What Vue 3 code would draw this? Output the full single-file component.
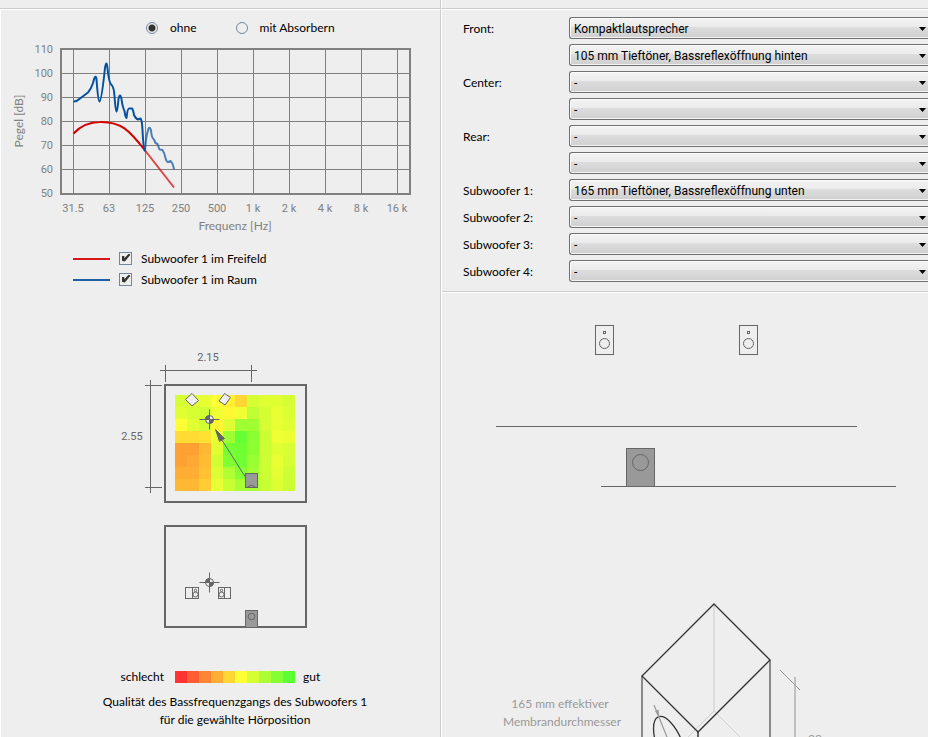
<script setup>
import { ref } from 'vue'

const absorber = ref('ohne')
const showFree = ref(true)
const showRoom = ref(true)

const freqs = ['31.5', '63', '125', '250', '500', '1 k', '2 k', '4 k', '8 k', '16 k']
const levels = [110, 100, 90, 80, 70, 60, 50]

const rows = [
  { id: 'front', label: 'Front:', value: 'Kompaktlautsprecher' },
  { id: 'front-type', name: 'Front Typ', value: '105 mm Tieftöner, Bassreflexöffnung hinten' },
  { id: 'center', label: 'Center:', value: '-' },
  { id: 'center-type', name: 'Center Typ', value: '-' },
  { id: 'rear', label: 'Rear:', value: '-' },
  { id: 'rear-type', name: 'Rear Typ', value: '-' },
  { id: 'sub1', label: 'Subwoofer 1:', value: '165 mm Tieftöner, Bassreflexöffnung unten' },
  { id: 'sub2', label: 'Subwoofer 2:', value: '-' },
  { id: 'sub3', label: 'Subwoofer 3:', value: '-' },
  { id: 'sub4', label: 'Subwoofer 4:', value: '-' },
]

const scale = ['#ff3333', '#ff5c33', '#ff8533', '#ffad33', '#ffd633', '#ffff33', '#d6ff33', '#adff33', '#85ff33', '#5cff33']

const heat = [
  'd6ff33 e0ff33 e8ff33 ffff33 fff033 ffd633 d6ff33 e0ff33 e0ff33 d6ff33',
  'e0ff33 d6ff33 d0ff33 f0ff33 fff833 f0ff33 c0ff33 d6ff33 e8ff33 dcff33',
  'ffff33 e0ff33 d0ff33 fff533 e0ff33 a0ff33 a0ff33 d6ff33 e8ff33 e0ff33',
  'ffdb33 ffdb33 ffe033 e8ff33 a0ff33 66ff33 8cff33 ccff33 f0ff33 ecff33',
  'ffa033 ffa033 ffb833 e0ff33 73ff33 70ff33 8cff33 ccff33 e0ff33 d8ff33',
  'ffa033 ffa833 ffbc33 d0ff33 80ff33 70ff33 99ff33 ccff33 e8ff33 d6ff33',
  'ffad33 ffad33 ffc033 dcff33 b0ff33 85ff33 a0ff33 ccff33 e4ff33 ccff33',
  'ffb833 ffb833 ffcc33 e8ff33 c8ff33 a8ff33 a8ff33 c8ff33 dcff33 ccff33',
].map((r) => r.split(' ').map((c) => '#' + c))
</script>

<template>
  <div class="page">
    <div class="topbar"><span></span><span></span></div>
    <main class="columns">
      <section class="left">
        <div class="modes">
          <label><input v-model="absorber" type="radio" name="absorber" value="ohne" /><span>ohne</span></label>
          <label><input v-model="absorber" type="radio" name="absorber" value="mit" /><span>mit Absorbern</span></label>
        </div>

        <svg class="chart" width="430" height="200" viewBox="0 40 430 200">
          <g class="grid">
            <path v-for="(f, i) in freqs" :key="f" :d="`M${73.5 + i * 36} 49V194`" />
            <path v-for="i in 5" :key="i" :d="`M61 ${49.5 + i * 24}H410`" />
            <rect x="61" y="49" width="349" height="145" />
          </g>
          <g class="axis">
            <text v-for="(l, i) in levels" :key="l" x="53" :y="53 + i * 24" text-anchor="end">{{ l }}</text>
            <text v-for="(f, i) in freqs" :key="f" :x="73 + i * 36" y="212" text-anchor="middle">{{ f }}</text>
            <text class="title" x="235" y="230" text-anchor="middle">Frequenz [Hz]</text>
            <text class="title" transform="translate(23 121) rotate(-90)" text-anchor="middle">Pegel [dB]</text>
          </g>
          <g v-if="showFree" class="curve free">
            <path d="M73.5 133.5C82 124.500 90 122 100 122C121 121.500 129 130 145.500 151" />
            <path class="faded" d="M145.500 151L174 187.500" />
          </g>
          <g v-if="showRoom" class="curve room">
            <path d="M73.500 101.500Q77 101.500 80 98.500L88 92.500Q91 89 93 83Q95.500 73 96.500 79Q98 101 99.500 101.500Q101.500 101 105 68Q106.500 59 107.500 68Q109 84 112 85.500Q114 88 114.500 96Q115.500 111.500 116.500 111.500Q117.500 111 118.500 99Q120 92 121.500 99Q122.500 107 124.500 111Q125.500 118 126.500 118Q127.500 108.500 129 108.500H132Q133 109 134 115Q136 119 138 119.500L140.500 118.500Q142 120 142.500 130Q143.500 150 145 151" />
            <path class="faded" d="M145 151Q146 135 148.500 129Q149.500 126 151 130Q151.500 138 154 139.500L155.500 143L157.500 144L159.500 149.500L162.500 150Q164.500 153 165.500 158Q167 163 168.500 162L170.500 161Q173 163 174 169.500" />
          </g>
        </svg>

        <div class="legend">
          <label><i class="swatch red"></i><input v-model="showFree" type="checkbox" /><span>Subwoofer 1 im Freifeld</span></label>
          <label><i class="swatch blue"></i><input v-model="showRoom" type="checkbox" /><span>Subwoofer 1 im Raum</span></label>
        </div>

        <svg class="plans" width="240" height="290" viewBox="100 345 240 290">
          <g class="dims">
            <path d="M160 370.500H257M165.500 365V382M251.500 365V382M150.500 380V493M145 385.500H162M145 487.500H162" />
            <text x="208" y="361" text-anchor="middle">2.15</text>
            <text x="132" y="440" text-anchor="middle">2.55</text>
          </g>
          <g shape-rendering="crispEdges">
            <template v-for="(r, y) in heat" :key="y">
              <rect v-for="(c, x) in r" :key="x" :x="175 + x * 12" :y="395 + y * 12" width="12" height="12" :fill="c" />
            </template>
          </g>
          <g class="walls">
            <rect x="165" y="385" width="141" height="117" />
            <rect x="165" y="526" width="141" height="101" />
          </g>
          <g class="item">
            <path class="face" d="M192 393.500L198.500 400.500L192 406L185.500 399.500Z" />
            <path class="face" d="M224.500 393.500L230.500 397.500L225 405L219 401Z" />
            <path d="M246 478L220 437" />
            <path class="solid" d="M215.500 429.500L224.500 438.500L219.500 441.500Z" />
            <rect class="sub" x="245.500" y="473.500" width="12" height="14" />
            <path d="M247 487.500L251.500 485L256 487.500" />
            <rect x="185.500" y="587.500" width="13" height="11" />
            <path d="M192.500 587V599M224.500 587V599" />
            <rect x="218.500" y="587.500" width="12" height="11" />
            <circle cx="195.500" cy="590.500" r="1.200" /><circle cx="195.500" cy="594.500" r="2.500" />
            <circle cx="221.500" cy="590.500" r="1.200" /><circle cx="221.500" cy="594.500" r="2.500" />
            <rect class="sub" x="245.500" y="610.500" width="12" height="17" />
            <circle cx="251.500" cy="616.500" r="3.300" />
          </g>
          <g v-for="cy in [419.5, 582.5]" :key="cy" class="item" :transform="`translate(209.5 ${cy})`">
            <circle class="face" r="4" />
            <path class="solid" d="M0 0V-4A4 4 0 0 0 -4 0ZM0 0V4A4 4 0 0 0 4 0Z" />
            <path d="M-10 0H10M0 -10V10" />
          </g>
        </svg>

        <div class="quality">
          <span>schlecht</span>
          <span class="bar"><i v-for="c in scale" :key="c" :style="{ background: c }"></i></span>
          <span>gut</span>
        </div>
        <p class="caption">Qualität des Bassfrequenzgangs des Subwoofers 1<br />für die gewählte Hörposition</p>
      </section>

      <section class="right">
        <form class="speakers">
          <div v-for="r in rows" :key="r.id" class="row">
            <label v-if="r.label" :for="r.id">{{ r.label }}</label>
            <span v-else></span>
            <span class="combo">
              <select :id="r.id" :aria-label="r.name"><option>{{ r.value }}</option></select>
            </span>
          </div>
        </form>
        <div class="views">
          <svg width="440" height="180" viewBox="480 310 440 180">
            <g class="item">
              <g v-for="dx in [0, 144]" :key="dx" :transform="`translate(${dx} 0)`">
                <rect x="595.500" y="325.500" width="18" height="29" />
                <rect x="603.500" y="331.500" width="2" height="2" /><circle cx="604.500" cy="343.500" r="5" />
              </g>
              <path d="M496 426.500H857" />
              <rect class="sub" x="626.500" y="448.500" width="28" height="38" />
              <circle cx="640.500" cy="462.500" r="8" />
              <path d="M601 486.500H896" />
            </g>
          </svg>
          <svg class="cabinet" width="440" height="157" viewBox="480 590 440 157">
            <path d="M714 604V711" stroke="#dcdcdc" stroke-width="2" />
            <path d="M678 747L714 711L750 747" stroke="#cfcfcf" />
            <path d="M642 676V747M770 660V747" stroke="#8a8a8a" stroke-width="2" />
            <path d="M698 732V747" stroke="#666" stroke-width="2" />
            <path d="M714 604L770 660L698 732L642 676Z" stroke="#333" stroke-width="1.300" />
            <circle r="1" transform="matrix(16.5 16.5 0 23.3 670 745)" vector-effect="non-scaling-stroke" stroke="#333" stroke-width="1.300" />
            <path d="M654 705L671 747" stroke="#999" stroke-width="1.200" />
            <path d="M659.500 718L655 711L658.500 709.500Z" stroke="none" fill="#999" />
            <path d="M795 677V747" stroke="#c0c0c0" stroke-width="2" />
            <path d="M780 670L800 690" stroke="#999" />
            <text x="560" y="708" text-anchor="middle">165 mm effektiver</text>
            <text x="562" y="726" text-anchor="middle">Membrandurchmesser</text>
            <text x="808" y="743">28</text>
          </svg>
        </div>
      </section>
    </main>
  </div>
</template>

<style>
body {
  background: #eee;
}
</style>

<style scoped>
.page {
  font-family: Lato, "Noto Sans", sans-serif;
  font-size: 12px;
  line-height: 18px;
  color: #000;
  background: #eee;
}
.topbar,
.columns {
  display: grid;
  grid-template-columns: 441px minmax(0, 1fr);
}
.topbar span {
  height: 8px;
  border-bottom: 1px solid #ccc;
}
.topbar span:first-child,
.left {
  border-right: 1px solid #ccc;
}
.topbar span + span,
.right {
  border-left: 1px solid #fff;
}
.left {
  border-top: 1px solid #fff;
  border-left: 1px solid #fff;
}
.modes {
  display: flex;
  gap: 39px;
  padding: 9px 0 0 145px;
}
.modes label {
  display: flex;
  align-items: center;
  gap: 12px;
  white-space: nowrap;
}
input {
  appearance: none;
  box-sizing: border-box;
  flex: none;
  margin: 0;
  border: 1px solid #75869a;
  background: #eee;
}
input[type="radio"] {
  width: 12px;
  height: 12px;
  border-radius: 50%;
}
input[type="radio"]:checked {
  background: radial-gradient(circle, #333 3px, #eee 4px);
}
input[type="checkbox"] {
  width: 13px;
  height: 13px;
  margin: 0 9px;
}
input[type="checkbox"]:checked::before {
  content: "";
  display: block;
  width: 8px;
  height: 8px;
  margin: 1px 0 0 2px;
  background: #333;
  clip-path: polygon(0 32%, 28% 32%, 30% 60%, 85% 0, 100% 0, 100% 22%, 36% 100%, 0 92%);
}
svg {
  display: block;
}
.chart {
  margin: 3px 0 0 -1px;
}
.grid * {
  fill: none;
  stroke: #808080;
}
.grid rect {
  stroke-width: 2px;
}
.axis {
  fill: #808080;
}
.axis text,
.dims text {
  font-family: Roboto, sans-serif;
  font-size: 11px;
}
.axis .title {
  font-family: Lato, sans-serif;
  font-size: 12px;
}
.curve {
  fill: none;
  stroke-width: 2px;
  stroke-linejoin: round;
}
.free {
  stroke: #d40000;
}
.room {
  stroke: #0650a0;
}
.faded {
  opacity: 0.7;
}
.legend {
  display: grid;
  gap: 1px;
  padding: 8px 0 0 72px;
}
.legend label {
  display: flex;
  align-items: center;
}
.legend span,
.legend i {
  margin-top: 2px;
}
.swatch {
  width: 37px;
  height: 2px;
}
.red {
  background: #d81818;
}
.blue {
  background: #1a60a8;
}
.plans {
  margin: 56px 0 0 99px;
}
.dims {
  fill: #666;
}
.dims path,
.item,
.walls {
  fill: none;
  stroke: #666;
}
.walls {
  stroke-width: 2px;
}
.face {
  fill: #eee;
}
.solid {
  fill: #666;
}
.sub {
  fill: #999;
}
.quality {
  display: grid;
  grid-template-columns: 163px 120px auto;
  column-gap: 11px;
  align-items: center;
  margin-top: 33px;
}
.quality span:first-child {
  text-align: right;
}
.quality span:last-child {
  margin-left: -3px;
}
.bar {
  display: flex;
}
.bar i {
  flex: 1;
  height: 12px;
}
.caption {
  width: 300px;
  margin: 7px 0 0 84px;
  text-align: center;
}
.speakers {
  display: grid;
  gap: 5px;
  padding: 7px 0 9px 21px;
  border-top: 1px solid #fff;
  border-bottom: 1px solid #ccc;
}
.row {
  display: grid;
  grid-template-columns: 106px minmax(0, 1fr);
  align-items: center;
}
.row label {
  padding-top: 2px;
}
.combo {
  position: relative;
  display: flex;
}
select {
  appearance: none;
  box-sizing: border-box;
  width: 100%;
  height: 22px;
  padding: 2px 20px 0 4px;
  border: 1px solid #707070;
  border-right: 0;
  border-radius: 3px 0 0 3px;
  background: linear-gradient(#f3f3f3, #ebebeb 45%, #ddd 45%, #cfcfcf);
  box-shadow: inset 1px 1px #fbfbfb, inset 0 -1px #f3f3f3;
  font-family: Roboto, sans-serif;
  font-size: 12px;
  color: #000;
}
.combo::after {
  content: "";
  position: absolute;
  right: 2px;
  top: 10px;
  width: 7px;
  height: 4px;
  background: #000;
  clip-path: polygon(0 0, 100% 0, 50% 100%);
  pointer-events: none;
}
.views {
  border-top: 1px solid #fff;
  padding: 17px 0 0 38px;
  overflow: hidden;
}
.cabinet {
  margin-top: 100px;
  fill: none;
}
.cabinet text {
  fill: #999;
}
</style>
